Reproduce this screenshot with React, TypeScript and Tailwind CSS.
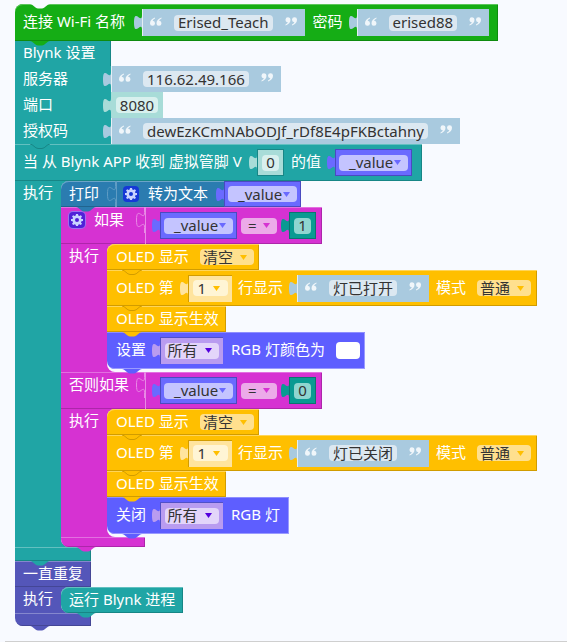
import { ReactNode } from 'react'

// block colours: fill + light top edge + dark right/bottom edge
const green = 'bg-[#15ad15] shadow-[inset_0_1px_0_#5cc65c,inset_-1px_-1px_0_#0f8b0f]'
const teal = 'bg-[#20a5a5] shadow-[inset_0_1px_0_#63c0c0,inset_-1px_-1px_0_#178686]'
const blue = 'bg-[#2b7cb0] shadow-[inset_0_1px_0_#6ba4c8,inset_-1px_-1px_0_#20648f]'
const pink = 'bg-[#d632d2] shadow-[inset_0_1px_0_#e36fe0,inset_-1px_-1px_0_#ad26aa]'
const yellow = 'bg-[#ffbf00] shadow-[inset_0_1px_0_#ffd559,inset_-1px_-1px_0_#d19c00]'
const violet = 'bg-[#5e5eff] shadow-[inset_0_1px_0_#8e8eff,inset_-1px_-1px_0_#9a9aff]'
const indigo = 'bg-[#5456b9] shadow-[inset_0_1px_0_#8587ce,inset_-1px_-1px_0_#444696]'

const TEAL = '#20a5a5'
const PINK = '#d632d2'
const YELLOW = '#ffbf00'
const VIOLET = '#5e5eff'
const BLUE = '#2b7cb0'
const INDIGO = '#5456b9'
const GREEN = '#15ad15'
const PAGE = '#f8faff'

function Tab({ fill }: { fill: string }) {
    return (
        <svg width="8" height="15" viewBox="0 0 8 15" className="shrink-0">
            <path d="M8 0c0 10-8-8-8 7.500S8 5 8 15z" fill={fill} />
        </svg>
    )
}

// the empty socket line where a block plugs into its neighbour
function Socket({ stroke }: { stroke: string }) {
    return (
        <svg width="9" height="26" viewBox="0 0 9 26" className="shrink-0">
            <path d="M8.500 0v5.500c0 10-8-8-8 7.500s8-2.500 8 7.500V26" fill="none" stroke={stroke} />
        </svg>
    )
}

function Notch({ fill, stroke, className }: { fill: string; stroke?: string; className: string }) {
    return (
        <svg width="20" height="5" viewBox="0 0 20 5" className={`absolute z-10 ${className}`}>
            <path d="M0 0c3 0 5 4.500 8 4.500h4c3 0 5-4.500 8-4.500z" fill={fill} />
            {stroke && <path d="M0 0c3 0 5 4.500 8 4.500h4c3 0 5-4.500 8-4.500" fill="none" stroke={stroke} />}
        </svg>
    )
}

function Arrow({ fill }: { fill: string }) {
    return (
        <svg width="7" height="5" viewBox="0 0 7 5" className="shrink-0">
            <path d="M0 0h7L3.500 5z" fill={fill} />
        </svg>
    )
}

function Gear({ className }: { className: string }) {
    return (
        <span className={`flex h-[16px] w-[16px] shrink-0 items-center justify-center rounded-[4px] ${className}`}>
            <svg width="12" height="12" viewBox="0 0 12 12">
                <path
                    fillRule="evenodd"
                    d="M5 0h2l.3 1.600 1.100.5L9.800 1.200l1.200 1.400-1 1.300.4 1.100L12 5v2l-1.600.3-.4 1.100 1 1.300-1.200 1.400-1.400-.9-1.100.5L7 12H5l-.3-1.300-1.100-.5-1.400.9L1 9.700l1-1.300-.4-1.100L0 7V5l1.600-.1L2 3.800 1 2.600l1.200-1.400 1.400.9 1.100-.5zM6 4a2 2 0 100 4 2 2 0 000-4z"
                    fill="#c9d4ff"
                />
            </svg>
        </span>
    )
}

// blockly draws the quote marks as images, so they are a drawing here too
function Quote({ close }: { close?: boolean }) {
    return (
        <svg width="12" height="9" viewBox="0 0 12 9" className={`-mt-[3px] shrink-0 ${close ? 'rotate-180' : ''}`}>
            <g fill="#f0f6fa">
                <path d="M5 0.500C2 1.500 0 3.500 0 6.200a2.500 2.500 0 1 0 2.700-2.400C3 2.800 3.900 2 5 1.500z" />
                <path d="M11.500 0.500c-3 1-5 3-5 5.700a2.500 2.500 0 1 0 2.700-2.400c.3-1 1.200-1.800 2.300-2.300z" />
            </g>
        </svg>
    )
}

function Field({ children, className = '' }: { children: ReactNode; className?: string }) {
    return (
        <span className={`flex h-[16px] items-center rounded-[4px] text-[15px] leading-none whitespace-nowrap text-[#333] ${className}`}>
            {children}
        </span>
    )
}

function Str({ text, className = 'h-[27px]' }: { text: string; className?: string }) {
    return (
        <div className={`flex items-center gap-[12px] bg-[#a9cadf] px-[8px] shadow-[inset_1px_0_0_#e4eef4] ${className}`}>
            <Quote />
            <Field className="bg-[#dce8f1] px-[4px]">{text}</Field>
            <Quote close />
        </div>
    )
}

function Value({ className = 'h-[27px]' }: { className?: string }) {
    return (
        <div className={`flex items-center bg-[#6a6aff] px-[4px] shadow-[inset_1px_1px_0_#4a4ac0,inset_-1px_-1px_0_#4a4ac0] ${className}`}>
            <Field className="w-[69px] justify-between bg-[#c4c4ff] pr-[7px] pl-[10px]">
                _value
                <Arrow fill="#6a6aff" />
            </Field>
        </div>
    )
}

function Num({ text, bg, field }: { text: string; bg: string; field: string }) {
    return (
        <div className={`flex h-[27px] w-[27px] items-center justify-center shadow-[inset_1px_1px_0_#0a7570,inset_-1px_-1px_0_#0a7570] ${bg}`}>
            <Field className={`w-[17px] justify-center ${field}`}>{text}</Field>
        </div>
    )
}

function Label({ children, className = '' }: { children: ReactNode; className?: string }) {
    return <span className={`pb-[2px] text-[15px] leading-none whitespace-nowrap text-white ${className}`}>{children}</span>
}

// "if" header: label cell, socket, then the compare block
function IfHeader({ label, num }: { label: ReactNode; num: string }) {
    return (
        <div className={`relative flex h-[37px] w-[261px] ${pink}`}>
            <div className="relative flex h-full w-[84px] items-center justify-between pb-[11px] pl-[8px]">
                {label}
                <div className="absolute top-0 right-0">
                    <Socket stroke="#e88ae5" />
                </div>
            </div>
            <div className="flex flex-1 items-center shadow-[inset_1px_0_0_#e88ae5]">
                <span className="w-[7px]" />
                <Tab fill="#6a6aff" />
                <Value />
                <Field className="mx-[4px] w-[36px] justify-between bg-[#ecaae9] pr-[7px] pl-[7px]">
                    =
                    <Arrow fill={PINK} />
                </Field>
                <Tab fill="#0a9a92" />
                <Num text={num} bg="bg-[#0a9a92]" field="bg-[#8fd6d0]" />
            </div>
        </div>
    )
}

function OledClear() {
    return (
        <div className={`relative flex h-[26px] w-[152px] items-center justify-between rounded-tl-[8px] pr-[5px] pl-[9px] ${yellow}`}>
            <Label>OLED 显示</Label>
            <Field className="w-[54px] justify-between bg-[#ffe08e] pr-[7px] pl-[3px]">
                清空
                <Arrow fill={YELLOW} />
            </Field>
            <Notch fill={YELLOW} stroke="#d19c00" className="top-full left-[15px]" />
        </div>
    )
}

function OledLine({ text }: { text: string }) {
    return (
        <div className={`relative flex h-[36px] w-[430px] items-center pl-[9px] ${yellow}`}>
            <Label className="w-[58px]">OLED 第</Label>
            <span className="w-[6px]" />
            <Tab fill="#ffe49e" />
            <div className="flex h-[27px] w-[44px] items-center justify-center bg-[#ffe49e] shadow-[inset_1px_1px_0_#d19c00]">
                <Field className="w-[35px] justify-between bg-[#fff5d5] pr-[8px] pl-[5px]">
                    1
                    <Arrow fill={YELLOW} />
                </Field>
            </div>
            <Label className="ml-[6px] w-[45px]">行显示</Label>
            <span className="w-[6px]" />
            <Tab fill="#a9cadf" />
            <Str text={text} />
            <Label className="ml-[7px] w-[41px]">模式</Label>
            <Field className="w-[54px] justify-between bg-[#ffe08e] pr-[7px] pl-[3px]">
                普通
                <Arrow fill={YELLOW} />
            </Field>
            <Notch fill={YELLOW} stroke="#d19c00" className="top-full left-[15px]" />
        </div>
    )
}

function OledShow() {
    return (
        <div className={`relative flex h-[26px] w-[119px] items-center pl-[9px] ${yellow}`}>
            <Label>OLED 显示生效</Label>
            <Notch fill={YELLOW} className="top-full left-[15px]" />
        </div>
    )
}

function RgbBlock({ label, children, width }: { label: string; children: ReactNode; width: string }) {
    return (
        <div className={`relative flex h-[37px] items-center rounded-bl-[8px] pl-[9px] ${violet} ${width}`}>
            <Label className="w-[30px]">{label}</Label>
            <span className="w-[6px]" />
            <Tab fill="#b99cf0" />
            <div className="flex h-[27px] w-[63px] items-center justify-center bg-[#b99cf0] shadow-[inset_1px_1px_0_#5050c8]">
                <Field className="w-[54px] justify-between bg-[#e3d5fa] pr-[7px] pl-[3px]">
                    所有
                    <Arrow fill="#5500dd" />
                </Field>
            </div>
            {children}
            <Notch fill={VIOLET} className="top-full left-[15px]" />
        </div>
    )
}

// arm of a C shaped block: label on the left, stacked blocks on the right
function Arm({ color, label, children }: { color: string; label: string; children: ReactNode }) {
    return (
        <div className={`flex ${color}`}>
            <div className="flex h-[26px] w-[46px] shrink-0 items-center pb-[2px] pl-[8px]">
                <Label>{label}</Label>
            </div>
            <div className="flex flex-col items-start rounded-l-[8px] bg-[#f8faff]">{children}</div>
        </div>
    )
}

export default function App() {
    return (
        <div className="flex h-[642px] w-[567px] flex-col overflow-hidden bg-[#f8faff] font-['Noto_Sans','Noto_Sans_CJK_SC',sans-serif]">
            <div className="flex flex-col items-start pt-[4px] pl-[15px]">
                {/* wifi */}
                <div className={`relative flex h-[37px] w-[483px] items-center rounded-tl-[8px] pl-[8px] ${green}`}>
                    <Notch fill={PAGE} className="top-0 left-[15px]" />
                    <Label className="w-[105px]">连接 Wi-Fi 名称</Label>
                    <span className="w-[6px]" />
                    <Tab fill="#a9cadf" />
                    <Str text="Erised_Teach" />
                    <Label className="ml-[8px] w-[30px]">密码</Label>
                    <span className="w-[6px]" />
                    <Tab fill="#a9cadf" />
                    <Str text="erised88" />
                    <Notch fill={GREEN} className="top-full left-[15px]" />
                </div>

                {/* blynk settings */}
                <div className="flex h-[25px] w-[96px] items-center bg-[#20a5a5] pl-[8px] shadow-[inset_-1px_0_0_#178686]">
                    <Label>Blynk 设置</Label>
                </div>
                {[
                    { label: '服务器', text: '116.62.49.166' },
                    { label: '端口', text: '' },
                    { label: '授权码', text: 'dewEzKCmNAbODJf_rDf8E4pFKBctahny' },
                ].map(row => (
                    <div key={row.label} className="flex h-[26px] items-center">
                        <div className="flex h-full w-[96px] items-center justify-between bg-[#20a5a5] pl-[8px]">
                            <Label>{row.label}</Label>
                            <Tab fill={row.text ? '#a9cadf' : '#a8dcd8'} />
                        </div>
                        {row.text ? (
                            <Str text={row.text} className="h-[26px]" />
                        ) : (
                            <div className="flex h-[26px] w-[52px] items-center justify-center bg-[#a8dcd8]">
                                <Field className="bg-[#d8f0ee] px-[4px]">8080</Field>
                            </div>
                        )}
                    </div>
                ))}

                {/* blynk handler */}
                <div className={`relative flex h-[37px] w-[407px] items-center pl-[8px] ${teal}`}>
                    <Notch fill={TEAL} stroke="#178686" className="top-0 left-[15px]" />
                    <Label className="w-[219px]">当 从 Blynk APP 收到 虚拟管脚 V</Label>
                    <span className="w-[7px]" />
                    <Tab fill="#a8dcd8" />
                    <div className="flex h-[27px] w-[27px] items-center justify-center bg-[#a8dcd8] shadow-[inset_1px_1px_0_#178686,inset_-1px_-1px_0_#178686]">
                        <Field className="w-[17px] justify-center bg-[#d8f0ee]">0</Field>
                    </div>
                    <Label className="ml-[7px] w-[29px]">的值</Label>
                    <span className="w-[7px]" />
                    <Tab fill="#6a6aff" />
                    <Value />
                </div>
                <Arm color="bg-[#20a5a5]" label="执行">
                    {/* print */}
                    <div className={`relative flex h-[26px] w-[240px] items-center rounded-tl-[8px] ${blue}`}>
                        <div className="relative flex h-full w-[55px] items-center pl-[8px]">
                            <Label>打印</Label>
                            <div className="absolute top-0 right-0">
                                <Socket stroke="#5f9cc4" />
                            </div>
                        </div>
                        <div className="flex h-full w-[108px] items-center shadow-[inset_1px_0_0_#5f9cc4]">
                            <Gear className="ml-[7px] bg-[#1638d6]" />
                            <Label className="ml-[9px] w-[60px]">转为文本</Label>
                            <span className="w-[8px]" />
                            <Tab fill="#6a6aff" />
                        </div>
                        <Value className="h-[26px] flex-1 bg-[#6a6aff]" />
                        <Notch fill={BLUE} className="top-full left-[15px]" />
                    </div>

                    {/* if / else if */}
                    <IfHeader
                        label={
                            <span className="flex items-center gap-[9px]">
                                <Gear className="bg-[#5020d8] shadow-[0_0_0_1px_#9a6ff0]" />
                                <Label>如果</Label>
                            </span>
                        }
                        num="1"
                    />
                    <Arm color="bg-[#d632d2]" label="执行">
                        <div className="flex flex-col items-start pb-[3px]">
                            <OledClear />
                            <OledLine text="灯已打开" />
                            <OledShow />
                            <RgbBlock label="设置" width="w-[258px]">
                                <Label className="ml-[8px] w-[93px]">RGB 灯颜色为</Label>
                                <span className="ml-[12px] h-[17px] w-[24px] rounded-[4px] bg-white" />
                            </RgbBlock>
                        </div>
                    </Arm>
                    <IfHeader label={<Label>否则如果</Label>} num="0" />
                    <Arm color="bg-[#d632d2]" label="执行">
                        <div className="flex flex-col items-start pb-[3px]">
                            <OledClear />
                            <OledLine text="灯已关闭" />
                            <OledShow />
                            <RgbBlock label="关闭" width="w-[182px]">
                                <Label className="ml-[8px]">RGB 灯</Label>
                            </RgbBlock>
                        </div>
                    </Arm>
                    <div className={`relative h-[10px] w-[84px] rounded-bl-[8px] ${pink}`}>
                        <Notch fill={PINK} className="top-full left-[15px]" />
                    </div>
                </Arm>
                <div className={`relative h-[14px] w-[76px] ${teal}`}>
                    <Notch fill={TEAL} className="top-full left-[15px]" />
                </div>

                {/* forever */}
                <div className={`flex h-[26px] w-[76px] items-center pl-[8px] ${indigo}`}>
                    <Label>一直重复</Label>
                </div>
                <Arm color="bg-[#5456b9]" label="执行">
                    <div className={`relative flex h-[26px] w-[122px] items-center rounded-l-[8px] pl-[8px] ${teal}`}>
                        <Label>运行 Blynk 进程</Label>
                        <Notch fill={TEAL} className="top-full left-[15px]" />
                    </div>
                </Arm>
                <div className={`relative h-[13px] w-[76px] rounded-bl-[8px] ${indigo}`}>
                    <Notch fill={INDIGO} className="top-full left-[15px]" />
                </div>
            </div>
            <div className="mt-auto ml-[5px] h-[1px] bg-[#cfcfcf]" />
        </div>
    )
}
